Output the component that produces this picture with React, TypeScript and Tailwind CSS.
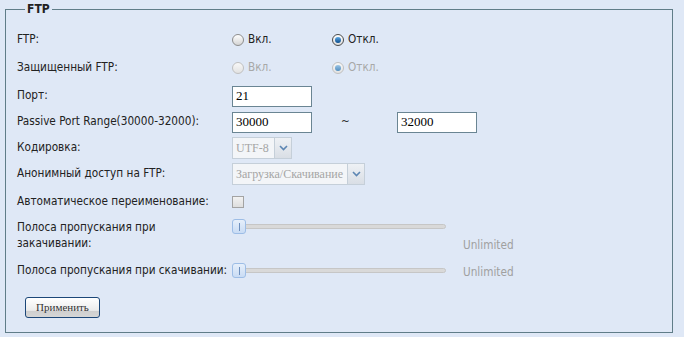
import React from 'react';

const sans = "font-['DejaVu_Sans_Condensed','Liberation_Sans',sans-serif]";
const serif = "font-['Liberation_Serif',serif]";

const Radio = ({ checked, disabled, label }: { checked?: boolean; disabled?: boolean; label: string }) => (
  <div className="flex items-center gap-[4px] w-[100px]">
    <span
      className={`relative w-[12px] h-[12px] rounded-full border flex items-center justify-center ${
        disabled
          ? 'border-[#c0c0c0] bg-gradient-to-b from-[#f8f8f8] to-[#e2e2e2]'
          : checked
            ? 'border-[#4a4a4a] bg-gradient-to-b from-[#ffffff] to-[#dcdcdc]'
            : 'border-[#8d8d8d] bg-gradient-to-b from-[#ffffff] to-[#d4d4d4]'
      }`}
    >
      {checked && (
        <span
          className={`w-[6px] h-[6px] rounded-full ${
            disabled ? 'bg-gradient-to-b from-[#9cc6e6] to-[#4f8dbf]' : 'bg-gradient-to-b from-[#5aa8e6] to-[#0a4d8c]'
          }`}
        />
      )}
    </span>
    <span className={disabled ? 'text-[#a8a8a8]' : 'text-[#222]'}>{label}</span>
  </div>
);

const TextInput = ({ value }: { value: string }) => (
  <div className={`w-[80px] h-[21px] border border-[#6a8593] bg-white flex items-center pl-[3px] text-[13px] text-black ${serif}`}>
    {value}
  </div>
);

const Select = ({ value, width }: { value: string; width: string }) => (
  <div className={`flex h-[22px] border border-[#c5cfd9] bg-[#f3f5f8] ${width}`}>
    <div className={`flex-1 flex items-center pl-[3px] text-[12px] whitespace-nowrap overflow-hidden text-[#a5a5a5] ${serif}`}>{value}</div>
    <div className="w-[17px] border-l border-[#c5cfd9] bg-gradient-to-b from-[#eef1f5] to-[#d9dee5] flex items-center justify-center">
      <svg width="9" height="6" viewBox="0 0 9 6">
        <path d="M1 1 L4.5 4.5 L8 1" fill="none" stroke="#5d86b3" strokeWidth="1.6" />
      </svg>
    </div>
  </div>
);

const Slider = () => (
  <div className="relative w-[214px] h-[15px] flex items-center">
    <div className="w-full h-[5px] rounded-full bg-[#d9d9d9] border border-[#c6c6c6]" />
    <div className="absolute left-0 top-0 w-[14px] h-[15px] rounded-[3px] border border-[#9dbde6] bg-gradient-to-b from-[#e6effb] to-[#c9dcf4] flex items-center justify-center">
      <div className="w-px h-[8px] bg-[#6d8fbd]" />
    </div>
  </div>
);

const Row = ({ label, children, className = '' }: { label: React.ReactNode; children?: React.ReactNode; className?: string }) => (
  <div className={`flex items-center h-[26px] ${className}`}>
    <div className="w-[215px] shrink-0 whitespace-nowrap">{label}</div>
    {children}
  </div>
);

export default function App() {
  return (
    <div className={`w-[684px] h-[337px] bg-[#dfe8f6] text-[11.7px] text-[#222] ${sans} pt-[2px]`}>
      <fieldset className="ml-[5px] w-[668px] h-[331px] border border-[#607d88] pl-[11px] pt-[11px]">
        <legend className="ml-[8px] px-[2px] font-bold text-[12px] leading-[14px] text-[#222]">FTP</legend>

        <Row label="FTP:">
          <Radio label="Вкл." />
          <Radio label="Откл." checked />
        </Row>
        <Row label="Защищенный FTP:" className="mt-[2px]">
          <Radio label="Вкл." disabled />
          <Radio label="Откл." checked disabled />
        </Row>
        <Row label="Порт:" className="mt-[2px]">
          <TextInput value="21" />
        </Row>
        <Row label="Passive Port Range(30000-32000):">
          <TextInput value="30000" />
          <span className="ml-[29px] w-[56px] text-[#333]">~</span>
          <TextInput value="32000" />
        </Row>
        <Row label="Кодировка:">
          <Select value="UTF-8" width="w-[60px]" />
        </Row>
        <Row label="Анонимный доступ на FTP:">
          <Select value="Загрузка/Скачивание" width="w-[133px]" />
        </Row>
        <Row label="Автоматическое переименование:" className="mt-[2px]">
          <div className="w-[12px] h-[12px] border border-[#a3a3a3] bg-gradient-to-b from-[#f2f2f2] to-[#dedede]" />
        </Row>

        <div className="flex items-start pt-[4px]">
          <div className="w-[215px] shrink-0 leading-[16px]">
            Полоса пропускания при
            <br />
            закачивании:
          </div>
          <Slider />
          <span className="ml-[17px] mt-[18px] text-[#a0a0a0]">Unlimited</span>
        </div>

        <div className="flex items-center h-[26px] mt-[3px]">
          <div className="w-[215px] shrink-0 whitespace-nowrap">Полоса пропускания при скачивании:</div>
          <Slider />
          <span className="ml-[17px] mt-[4px] text-[#a0a0a0]">Unlimited</span>
        </div>

        <button
          className={`mt-[13px] ml-[8px] w-[75px] h-[21px] rounded-[3px] border border-[#1c4778] bg-[linear-gradient(to_bottom,#ffffff_0%,#ececec_65%,#cfcfcf_70%,#d6d6d6_100%)] text-[11px] text-[#333] ${serif}`}
        >
          Применить
        </button>
      </fieldset>
    </div>
  );
}
